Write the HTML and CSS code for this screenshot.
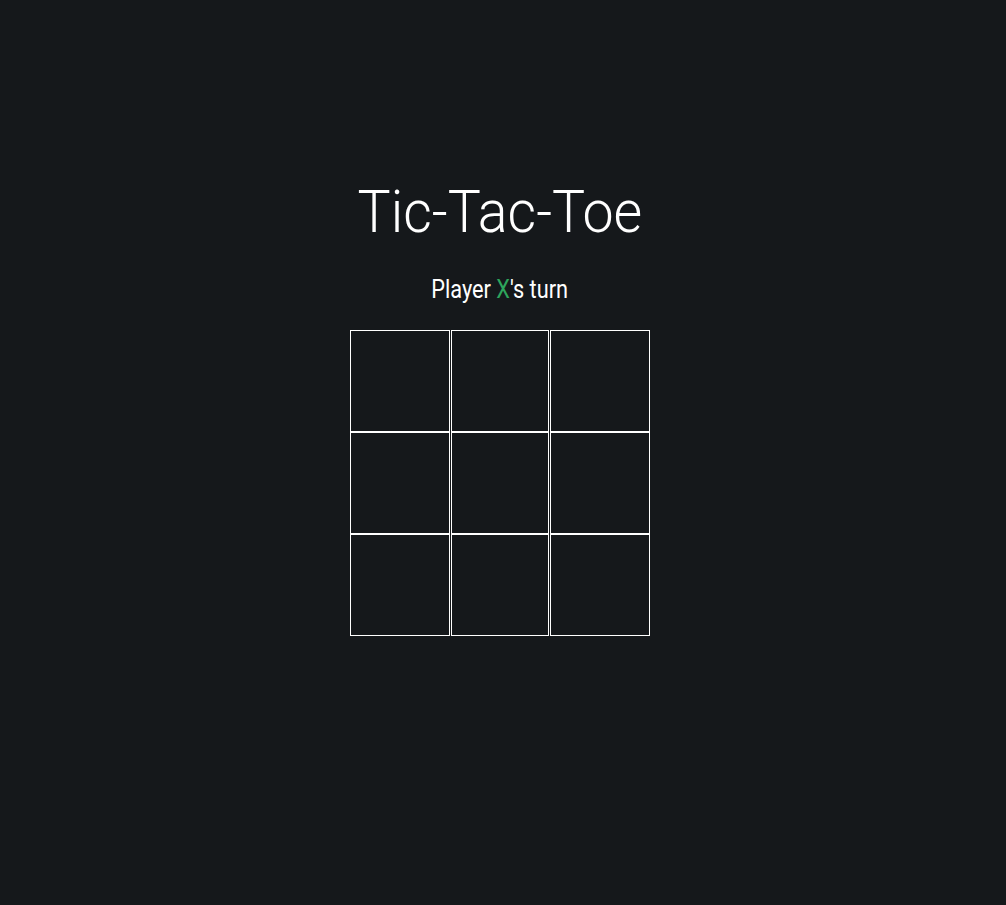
FILE: index.html
```html
<!DOCTYPE html>
<html>
<head>
<meta charset="utf-8">
<link rel="stylesheet" href="styles.css">
</head>
<body>
<main class="game">
  <h1 class="title">Tic-Tac-Toe</h1>
  <p class="status">Player <span class="player-x">X</span>'s turn</p>
  <div class="board">
    <div class="cell"></div><div class="cell"></div><div class="cell"></div>
    <div class="cell"></div><div class="cell"></div><div class="cell"></div>
    <div class="cell"></div><div class="cell"></div><div class="cell"></div>
  </div>
</main>
</body>
</html>
```

FILE: styles.css
```css
html, body {
  margin: 0;
  padding: 0;
  height: 100%;
}
body {
  background: #15181b;
  color: #ffffff;
  font-family: Roboto, "Liberation Sans", sans-serif;
}
.game {
  display: flex;
  flex-direction: column;
  align-items: center;
  padding-top: 177px;
  padding-right: 6px;
}
.title {
  margin: 0;
  font-size: 60px;
  font-weight: 300;
  line-height: 70px;
  transform: scaleX(0.925);
}
.status {
  margin: 28px 0 0;
  font-size: 25px;
  font-weight: 400;
  line-height: 30px;
  transform: scaleX(0.87);
}
.player-x {
  color: #2ea55c;
}
.board {
  margin-top: 25px;
  display: grid;
  grid-template-columns: 100px 98px 100px;
  grid-auto-rows: 102px;
  column-gap: 1px;
}
.cell {
  border: 1px solid #ffffff;
  box-sizing: border-box;
}
```
